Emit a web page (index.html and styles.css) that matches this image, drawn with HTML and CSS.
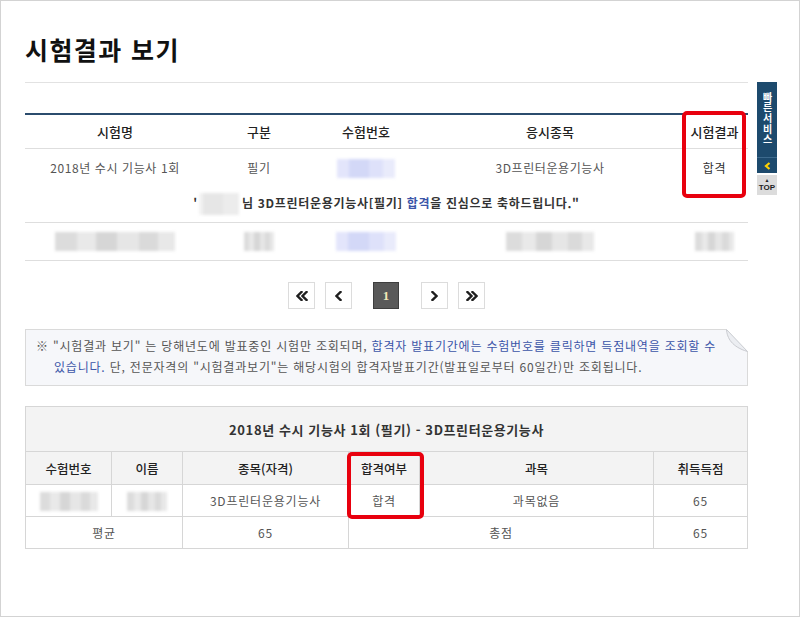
FILE: index.html
```html
<!DOCTYPE html>
<html lang="ko">
<head>
<meta charset="utf-8">
<title>시험결과 보기</title>
<link rel="stylesheet" href="styles.css">
</head>
<body>
<div class="page">
  <div class="title-wrap"><h1 class="title">시험결과 보기</h1></div>

  <table class="result">
    <colgroup><col class="r1"><col class="r2"><col class="r3"><col class="r4"><col class="r5"></colgroup>
    <thead>
      <tr><th>시험명</th><th>구분</th><th>수험번호</th><th>응시종목</th><th>시험결과</th></tr>
    </thead>
    <tbody>
      <tr class="row-main">
        <td>2018년 수시 기능사 1회</td>
        <td>필기</td>
        <td><span class="blur blue bw58"></span></td>
        <td>3D프린터운용기능사</td>
        <td class="dark">합격</td>
      </tr>
      <tr class="row-msg">
        <td colspan="5"><span class="msg">'<span class="blur light bname"></span>님 3D프린터운용기능사[필기] <span class="hl">합격</span>을 진심으로 축하드립니다."</span></td>
      </tr>
      <tr class="row-blur">
        <td><span class="blur gray bw120"></span></td>
        <td><span class="blur gray bw30"></span></td>
        <td><span class="blur blue bw60"></span></td>
        <td><span class="blur gray bw88"></span></td>
        <td><span class="blur gray bw39"></span></td>
      </tr>
    </tbody>
  </table>

  <div class="pager">
    <span class="pg"><svg width="12" height="10" viewBox="0 0 12 10"><polyline points="5.5,1 1.5,5 5.5,9" /><polyline points="10.5,1 6.5,5 10.5,9" /></svg></span>
    <span class="pg gap-l"><svg width="7" height="10" viewBox="0 0 7 10"><polyline points="5.5,1 1.5,5 5.5,9" /></svg></span>
    <span class="pg cur gap-m">1</span>
    <span class="pg gap-r"><svg width="7" height="10" viewBox="0 0 7 10"><polyline points="1.5,1 5.5,5 1.5,9" /></svg></span>
    <span class="pg gap-s"><svg width="12" height="10" viewBox="0 0 12 10"><polyline points="1.5,1 5.5,5 1.5,9" /><polyline points="6.5,1 10.5,5 6.5,9" /></svg></span>
  </div>

  <div class="notice">
    <p>※ "시험결과 보기" 는 당해년도에 발표중인 시험만 조회되며, <span class="link">합격자 발표기간에는 수험번호를 클릭하면 득점내역을 조회할 수<br>있습니다.</span> 단, 전문자격의 "시험결과보기"는 해당시험의 합격자발표기간(발표일로부터 60일간)만 조회됩니다.</p>
    <svg class="curl" width="22" height="23" viewBox="0 0 22 23">
      <polygon points="0,0 22,0 22,23" fill="#ffffff"/>
      <path d="M0.5,0.5 C1,9 6,18 21.5,22.5 L0.5,0.5 Z" fill="#eceef2" stroke="#c9cbd0" stroke-width="1"/>
    </svg>
  </div>

  <table class="score">
    <colgroup><col class="s1"><col class="s2"><col class="s3"><col class="s4"><col class="s5"><col class="s6"></colgroup>
    <thead>
      <tr><th colspan="6" class="cap">2018년 수시 기능사 1회 (필기) - 3D프린터운용기능사</th></tr>
      <tr class="hd"><th>수험번호</th><th>이름</th><th>종목(자격)</th><th>합격여부</th><th>과목</th><th>취득득점</th></tr>
    </thead>
    <tbody>
      <tr>
        <td><span class="blur gray bw58"></span></td>
        <td><span class="blur gray bw40"></span></td>
        <td>3D프린터운용기능사</td>
        <td>합격</td>
        <td>과목없음</td>
        <td>65</td>
      </tr>
      <tr>
        <td colspan="2">평균</td>
        <td>65</td>
        <td colspan="2">총점</td>
        <td>65</td>
      </tr>
    </tbody>
  </table>
</div>

<div class="mark mark-1"></div>
<div class="mark mark-2"></div>

<div class="quick">
  <div class="quick-label"><span class="vtext">빠른서비스</span></div>
  <div class="quick-toggle"><svg width="7" height="8" viewBox="0 0 7 8"><polyline points="5.5,1 2,4 5.5,7" /></svg></div>
  <div class="quick-top"><span class="arrow">▲</span><span class="top">TOP</span></div>
</div>
</body>
</html>
```

FILE: styles.css
```css
* { box-sizing: border-box; }
html, body { margin: 0; padding: 0; }
body {
  width: 800px;
  height: 617px;
  border: 1px solid #d3d3d3;
  background: #fff;
  font-family: "Noto Sans CJK KR", "Noto Sans", sans-serif;
  font-size: 12px;
  color: #555;
  position: relative;
  overflow: hidden;
}
.page { padding: 33px 51px 0 24px; }

.title-wrap { padding-bottom: 18px; border-bottom: 1px solid #e2e2e2; }
.title {
  margin: 0;
  font-size: 25px;
  line-height: 30px;
  font-weight: bold;
  color: #111;
  letter-spacing: 1.4px;
}

/* result table */
.result {
  width: 723px;
  margin-top: 30px;
  border-collapse: separate;
  border-spacing: 0;
  table-layout: fixed;
  border-top: 2px solid #2b4c6d;
}
.r1 { width: 180px; } .r2 { width: 108px; } .r3 { width: 106px; } .r4 { width: 262px; } .r5 { width: 67px; }
.result th {
  font-size: 13px;
  font-weight: 500;
  color: #222;
  line-height: 33px;
  padding: 0;
  border-bottom: 1px solid #dedede;
  text-align: center;
}
.result td { padding: 0; text-align: center; vertical-align: middle; letter-spacing: 0.6px; }
.row-main td { height: 37px; line-height: 20px; }
.row-main .dark { color: #333; }
.row-msg td { height: 37px; line-height: 20px; border-bottom: 1px solid #dedede; }
.row-blur td { height: 38px; border-bottom: 1px solid #dedede; line-height: 0; }
.msg { font-weight: bold; color: #333; letter-spacing: 0.7px; }
.hl { color: #3b55a8; }

.blur { display: inline-block; height: 19px; vertical-align: middle; filter: blur(1.6px); }
.blur.gray { background: linear-gradient(90deg, #dcdcdc 0 18%, #e9e9e9 18% 34%, #d6d6d6 34% 52%, #e6e6e6 52% 70%, #dadada 70% 86%, #e8e8e8 86%); }
.blur.light { background: linear-gradient(90deg, #f2f2f2 0 10%, #e6e6e6 10% 60%, #ececec 60%); height: 22px; }
.blur.blue { background: linear-gradient(90deg, #e3e5fb 0 20%, #d3d8f7 20% 55%, #dee1fa 55% 80%, #e9ebfb 80%); }
.bw58 { width: 58px; } .bw60 { width: 60px; } .bw120 { width: 120px; } .bw30 { width: 30px; }
.bw88 { width: 88px; } .bw39 { width: 39px; } .bw40 { width: 40px; }
.bname { width: 40px; margin: 0 3px 0 1px; }

/* pager */
.pager { display: flex; justify-content: center; margin: 21px 0 20px; }
.pg {
  width: 27px; height: 27px;
  border: 1px solid #dcdcdc;
  background: #fff;
  display: flex; align-items: center; justify-content: center;
}
.pg svg polyline { fill: none; stroke: #1e1e1e; stroke-width: 2.4; stroke-linecap: square; }
.gap-l { margin-left: 10px; }
.gap-m { margin-left: 21px; }
.gap-r { margin-left: 22px; }
.gap-s { margin-left: 10px; }
.pg.cur {
  background: #595959;
  border-color: #3e3e3e;
  color: #f1e8b8;
  font-family: "Liberation Serif", serif;
  font-weight: bold;
  font-size: 13px;
  width: 26px;
}

/* notice */
.notice {
  position: relative;
  border: 1px solid #dadada;
  background: #f6f7fa;
  padding: 5px 20px 8px 28px;
}
.notice p {
  margin: 0;
  line-height: 21px;
  text-indent: -18px;
  color: #555;
  font-size: 12px;
  letter-spacing: 0.8px;
  white-space: nowrap;
}
.link { color: #3b55a8; }
.curl { position: absolute; top: -1px; right: -1px; }

/* score table */
.score {
  width: 723px;
  margin-top: 20px;
  border-collapse: separate;
  border-spacing: 0;
  table-layout: fixed;
  border-top: 1px solid #d6d6d6;
  border-left: 1px solid #d6d6d6;
}
.s1 { width: 86px; } .s2 { width: 71px; } .s3 { width: 166px; } .s4 { width: 71px; } .s5 { width: 234px; } .s6 { width: 94px; }
.score th, .score td {
  border-right: 1px solid #d6d6d6;
  border-bottom: 1px solid #d6d6d6;
  text-align: center;
  padding: 0;
  vertical-align: middle;
}
.score .cap {
  background: #f3f3f3;
  height: 45px;
  font-size: 13px;
  font-weight: bold;
  color: #333;
  letter-spacing: 0.6px;
}
.score .hd th {
  background: #f3f3f3;
  height: 33px;
  font-size: 12.5px;
  font-weight: 500;
  color: #222;
}
.score td { height: 32px; color: #555; letter-spacing: 0.8px; }

/* annotation marks */
.mark { position: absolute; border: 4px solid #e8000e; border-radius: 5px; }
.mark-1 { left: 681px; top: 110px; width: 64px; height: 87px; }
.mark-2 { left: 346px; top: 451px; width: 77px; height: 67px; }

/* quick menu */
.quick { position: absolute; left: 756px; top: 81px; width: 20px; }
.quick-label {
  background: #1d4a6d;
  height: 75px;
  display: flex;
  justify-content: center;
  padding-top: 10px;
}
.vtext {
  writing-mode: vertical-rl;
  text-orientation: upright;
  color: #fff;
  font-weight: bold;
  font-size: 10px;
  line-height: 12px;
  letter-spacing: 0.6px;
}
.quick-toggle {
  background: #1d4a6d;
  border-top: 1px solid #3d6a8d;
  height: 16px;
  display: flex; align-items: center; justify-content: center;
}
.quick-toggle polyline { fill: none; stroke: #ffd200; stroke-width: 2.2; }
.quick-top {
  margin-top: 2px;
  height: 20px;
  background: #dcdcdc;
  display: flex; flex-direction: column; align-items: center; justify-content: center;
  color: #222;
  font-family: "Liberation Sans", sans-serif;
  font-weight: bold;
}
.quick-top .arrow { font-size: 5px; line-height: 5px; }
.quick-top .top { font-size: 8px; line-height: 9px; }
```
